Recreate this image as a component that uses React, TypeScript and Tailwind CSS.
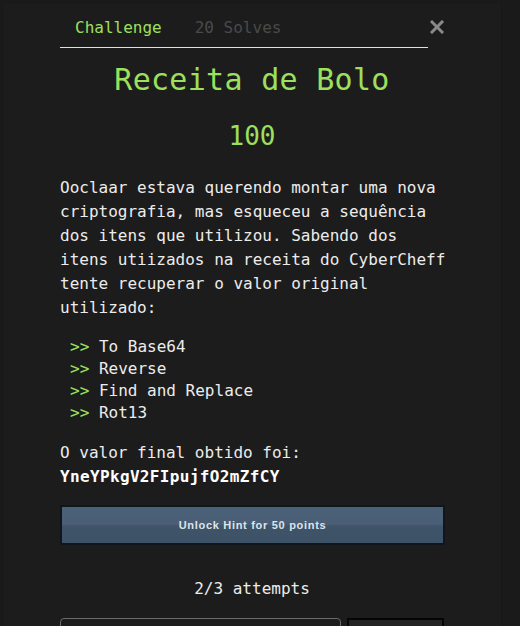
import React from "react";

const mono = { fontFamily: '"DejaVu Sans Mono", "Liberation Mono", monospace' };

export default function App() {
  const steps = ["To Base64", "Reverse", "Find and Replace", "Rot13"];
  return (
    <div className="w-[520px] h-[626px] overflow-hidden bg-[#1a1a1a]" style={mono}>
      <div className="ml-[4px] mt-[4px] w-[498px] h-[640px] bg-[#1c1c1c] pl-[56px] pr-[57px] border-r border-[#171717]">
        {/* header */}
        <div className="flex items-start pt-[12px]">
          <div className="w-[372px] border-b border-[#e0e0e0] pb-[7px] pl-[15px] flex text-[16px] leading-[24px]">
            <span className="text-[#9ce05d]">Challenge</span>
            <span className="ml-[33px] text-[#4a4a4a]">20 Solves</span>
          </div>
          <div className="ml-[2px] pt-[1px]">
            <svg width="14" height="14" viewBox="0 0 14 14" className="mt-[3px]">
              <path d="M2 2 L12 12 M12 2 L2 12" stroke="#8a8a8a" strokeWidth="3" strokeLinecap="square" />
            </svg>
          </div>
        </div>

        <div className="mt-[14px] text-center text-[30px] leading-[36px] text-[#9ce05d] tracking-[0.3px]">Receita de Bolo</div>
        <div className="mt-[22px] text-center text-[26px] leading-[32px] text-[#9ce05d]">100</div>

        <p className="mt-[24px] text-[16px] leading-[24px] text-[#ececec] w-[392px]">
          Ooclaar estava querendo montar uma nova criptografia, mas esqueceu a sequência dos itens que utilizou. Sabendo dos itens utiizados na receita do CyberCheff tente recuperar o valor original utilizado:
        </p>

        <ul className="mt-[16px] pl-[10px] text-[16px] leading-[22px] text-[#ececec]">
          {steps.map((s) => (
            <li key={s} className="flex">
              <span className="text-[#9ce05d] whitespace-pre">{">> "}</span>
              <span>{s}</span>
            </li>
          ))}
        </ul>

        <div className="mt-[17px] text-[16px] leading-[24px] text-[#ececec]">O valor final obtido foi:</div>
        <div className="text-[16px] leading-[24px] text-white font-bold tracking-[0.35px]">YneYPkgV2FIpujfO2mZfCY</div>

        <div className="mt-[16px] w-[385px] h-[40px] border-2 border-[#11161c] bg-[linear-gradient(to_bottom,#4b6178_0%,#4a5f76_48%,#3f5469_52%,#3d5267_100%)] flex items-center justify-center">
          <span
            className="text-[11px] font-bold tracking-[0.7px] text-[#dde4ea]"
            style={{ fontFamily: '"Liberation Sans", Arial, sans-serif' }}
          >
            Unlock Hint for 50 points
          </span>
        </div>

        <div className="mt-[32px] text-center text-[16px] leading-[24px] text-[#ececec]">2/3 attempts</div>

        <div className="mt-[17px] flex gap-[6px]">
          <div className="w-[282px] h-[40px] border border-[#6a6a6a] rounded-t-[4px] bg-[#1c1c1c]" />
          <div className="w-[97px] h-[40px] border-2 border-[#050505] bg-[#232323]" />
        </div>
      </div>
    </div>
  );
}
